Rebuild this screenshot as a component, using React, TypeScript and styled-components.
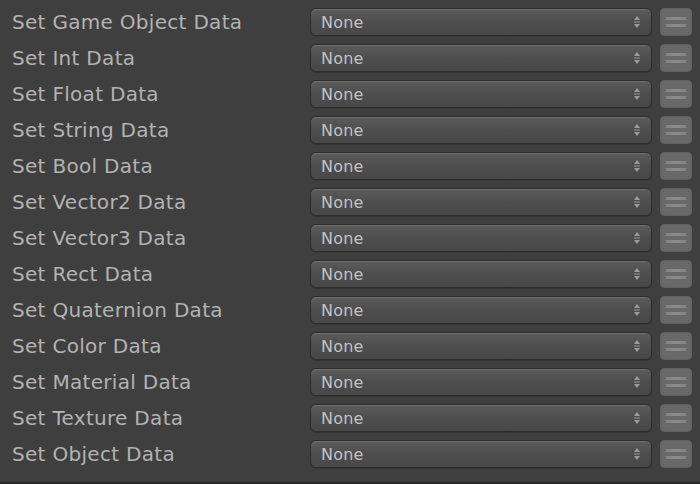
import React from "react";
import styled, { createGlobalStyle } from "styled-components";

const fields = [
  "Set Game Object Data",
  "Set Int Data",
  "Set Float Data",
  "Set String Data",
  "Set Bool Data",
  "Set Vector2 Data",
  "Set Vector3 Data",
  "Set Rect Data",
  "Set Quaternion Data",
  "Set Color Data",
  "Set Material Data",
  "Set Texture Data",
  "Set Object Data",
];

const GlobalStyle = createGlobalStyle`
  html, body {
    margin: 0;
    padding: 0;
    background: #3f3f3f;
  }
`;

const Panel = styled.div`
  width: 700px;
  height: 484px;
  box-sizing: border-box;
  background: #3f3f3f;
  border-bottom: 2px solid #2a2a2a;
  padding-top: 8px;
  display: flex;
  flex-direction: column;
  gap: 8px;
  font-family: "DejaVu Sans", "Liberation Sans", sans-serif;
`;

const Row = styled.div`
  display: flex;
  align-items: center;
  height: 28px;
`;

const Label = styled.div`
  width: 298px;
  padding-left: 12px;
  font-size: 20px;
  letter-spacing: 0.3px;
  color: #b3b3b3;
  white-space: nowrap;
`;

const Select = styled.div`
  width: 342px;
  height: 28px;
  box-sizing: border-box;
  display: flex;
  align-items: center;
  justify-content: space-between;
  padding: 0 10px 0 10px;
  border-radius: 6px;
  border: 1px solid #2b2b2b;
  background: linear-gradient(#5c5c5c, #4d4d4d 50%, #484848);
  box-shadow: inset 0 1px 0 #707070, 0 1px 0 #353535;
  color: #c2c2c2;
  font-size: 16px;
  letter-spacing: 0.2px;
`;

const Arrows = styled.svg`
  width: 8px;
  height: 14px;
`;

const MenuButton = styled.div`
  width: 32px;
  height: 28px;
  margin-left: 8px;
  box-sizing: border-box;
  border-radius: 5px;
  background: #696969;
  box-shadow: inset 0 0 2px #5a5a5a;
  display: flex;
  flex-direction: column;
  align-items: center;
  justify-content: center;
  gap: 4px;
`;

const Bar = styled.div`
  width: 20px;
  height: 3px;
  border-radius: 1px;
  background: #8a8a8a;
`;

const App: React.FC = () => (
  <>
    <GlobalStyle />
    <Panel>
      {fields.map((name) => (
        <Row key={name}>
          <Label>{name}</Label>
          <Select>
            <span>None</span>
            <Arrows viewBox="0 0 8 14">
              <path d="M4 1 L7 5 H1 Z" fill="#9a9a9a" />
              <path d="M1 7 H7" stroke="#9a9a9a" strokeWidth="1" />
              <path d="M1 9 H7 L4 13 Z" fill="#9a9a9a" />
            </Arrows>
          </Select>
          <MenuButton>
            <Bar />
            <Bar />
          </MenuButton>
        </Row>
      ))}
    </Panel>
  </>
);

export default App;
